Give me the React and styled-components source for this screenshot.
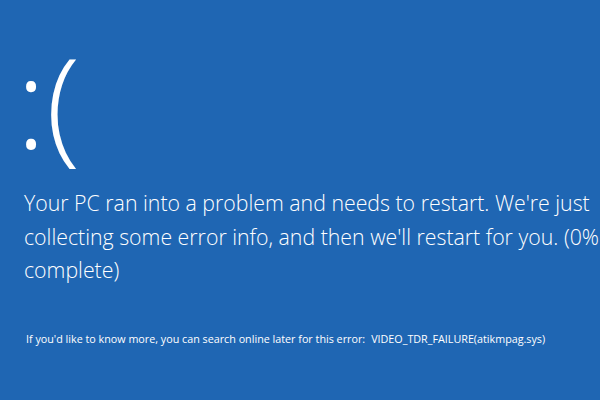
import React from "react";
import styled, { createGlobalStyle } from "styled-components";

const Global = createGlobalStyle`
  html, body { margin: 0; padding: 0; width: 600px; height: 400px; overflow: hidden; background: #1f66b3; }
  #root { width: 600px; height: 400px; }
`;

const Screen = styled.div`
  width: 600px;
  height: 400px;
  background: #1f66b3;
  color: #ffffff;
  font-family: "Open Sans", "Noto Sans", sans-serif;
  padding: 0 0 0 24px;
  box-sizing: border-box;
  display: flex;
  flex-direction: column;
  overflow: hidden;
`;

const Face = styled.div`
  font-weight: 300;
  font-size: 126px;
  line-height: 1;
  margin-top: 37px;
  margin-left: -8px;
  height: 149px;
  white-space: nowrap;
`;

const Message = styled.p`
  margin: 0;
  font-size: 21.3px;
  font-weight: 300;
  line-height: 33.5px;
  white-space: nowrap;
`;

const Details = styled.div`
  margin-top: 45px;
  font-size: 10.75px;
  line-height: 15px;
  white-space: nowrap;
  display: flex;
  gap: 6px;
  padding-left: 2px;
`;

export default function App() {
  return (
    <>
      <Global />
      <Screen>
        <Face>:(</Face>
        <Message>
          Your PC ran into a problem and needs to restart. We're just
          <br />
          collecting some error info, and then we'll restart for you. (0%
          <br />
          complete)
        </Message>
        <Details>
          <span>If you'd like to know more, you can search online later for this error:</span>
          <span>VIDEO_TDR_FAILURE(atikmpag.sys)</span>
        </Details>
      </Screen>
    </>
  );
}
